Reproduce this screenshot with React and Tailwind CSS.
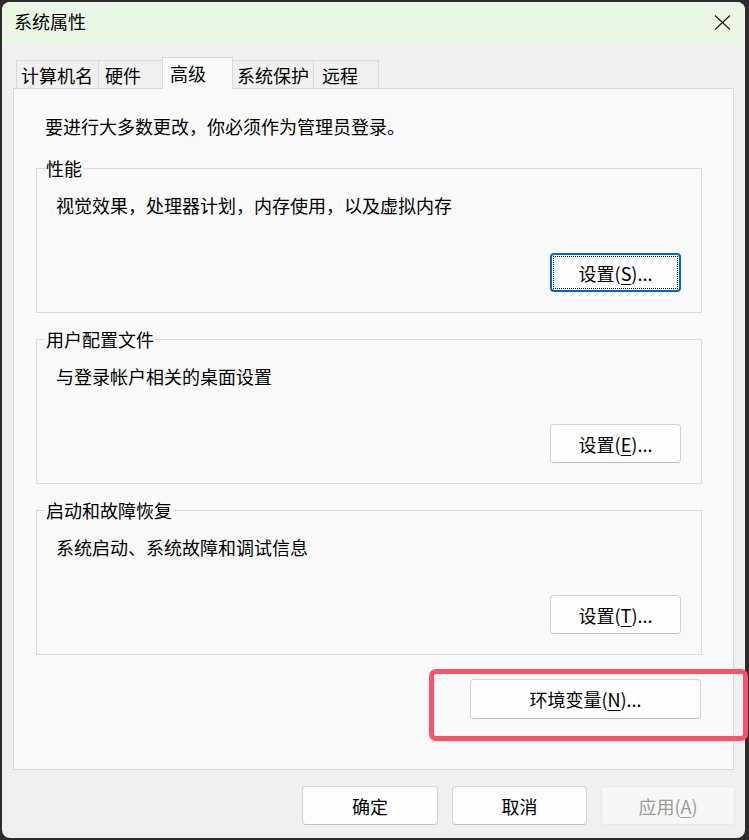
function Btn({ children, w = "w-[131px]", h = "h-[39px]", focused = false, disabled = false, extra = "" }) {
  const base =
    "relative flex items-center justify-center rounded-[4px] text-[18px] leading-[18px] " + w + " " + h + " " + extra;
  if (focused) {
    return (
      <div className={base + " bg-[#fdfdfd] border-2 border-[#0067c0]"}>
        <span className="absolute inset-[1px] border border-dotted border-black rounded-[1px]"></span>
        <span className="relative">{children}</span>
      </div>
    );
  }
  if (disabled) {
    return (
      <div className={base + " bg-[#f7f7f7] border border-[#e8e8e8] text-[#9a9a9a]"}>
        {children}
      </div>
    );
  }
  return (
    <div className={base + " bg-[#fdfdfd] border border-[#d3d3d3] border-b-[#c2c2c2]"}>
      {children}
    </div>
  );
}

function U({ children }) {
  return <span className="underline decoration-1 underline-offset-[3px]">{children}</span>;
}

function Group({ label, desc, btn, extra = "" }) {
  return (
    <div className={"relative flex flex-col h-[145px] border border-[#dcdcdc] pt-[27px] pl-[19px] pr-[20px] " + extra}>
      <span className="absolute left-[8px] -top-[10px] px-[1px] bg-[#f9f9f9] leading-[18px]">{label}</span>
      <div className="leading-[18px]">{desc}</div>
      <div className="self-end mt-[39px]">{btn}</div>
    </div>
  );
}

export default function App() {
  const tabs = [
    { t: "计算机名", w: "w-[83px]", pl: "pl-[4px]" },
    { t: "硬件", w: "w-[65px]", pl: "pl-[6px]" },
    { t: "高级", w: "w-[71px]", pl: "pl-[7px]", sel: true },
    { t: "系统保护", w: "w-[82px]", pl: "pl-[4px]" },
    { t: "远程", w: "w-[66px]", pl: "pl-[8px]" },
  ];
  return (
    <div className="relative w-[749px] h-[840px] bg-[#2b2b2b] pt-[2px] pl-[2px] pr-[4px] pb-[2px] font-['Noto_Sans_CJK_SC','Noto_Sans',sans-serif] text-[18px] leading-[18px] text-black">
      <div className="h-full rounded-[8px] overflow-hidden bg-[#f0f0f0] flex flex-col">
        {/* title bar */}
        <div className="h-[42px] shrink-0 bg-[#ebf7e6] flex items-start justify-between pt-[10px] pl-[12px] pr-[14px]">
          <span className="leading-[18px]">系统属性</span>
          <svg className="mt-[3px]" width="17" height="15" viewBox="0 0 17 15">
            <path d="M1 0.5 L16 14.5 M16 0.5 L1 14.5" stroke="#1c1c1c" strokeWidth="1.2" fill="none" />
          </svg>
        </div>
        {/* tabs */}
        <div className="mt-[13px] ml-[14px] h-[32px] flex items-end">
          {tabs.map((tb, i) =>
            tb.sel ? (
              <div
                key={i}
                className={"relative z-10 -ml-px h-[32px] border border-b-0 border-[#d9d9d9] bg-[#f9f9f9] pt-[6px] " + tb.w + " " + tb.pl}
              >
                {tb.t}
              </div>
            ) : (
              <div
                key={i}
                className={"h-[29px] border border-b-0 border-[#d9d9d9] bg-[#f0f0f0] pt-[5px] " + (i > 0 ? "-ml-px " : "") + tb.w + " " + tb.pl}
              >
                {tb.t}
              </div>
            )
          )}
        </div>
        {/* panel */}
        <div className="-mt-px mx-[11px] h-[682px] shrink-0 border border-[#d9d9d9] bg-[#f9f9f9] flex flex-col pt-[28px] pl-[22px] pr-[31px]">
          <div className="ml-[9px]">要进行大多数更改，你必须作为管理员登录。</div>
          <Group
            extra="mt-[33px]"
            label="性能"
            desc="视觉效果，处理器计划，内存使用，以及虚拟内存"
            btn={
              <Btn focused>
                设置(<U>S</U>)...
              </Btn>
            }
          />
          <Group
            extra="mt-[26px]"
            label="用户配置文件"
            desc="与登录帐户相关的桌面设置"
            btn={
              <Btn>
                设置(<U>E</U>)...
              </Btn>
            }
          />
          <Group
            extra="mt-[26px]"
            label="启动和故障恢复"
            desc="系统启动、系统故障和调试信息"
            btn={
              <Btn>
                设置(<U>T</U>)...
              </Btn>
            }
          />
          <div className="self-end mt-[24px] mr-[1px]">
            <Btn w="w-[231px]" h="h-[40px]">
              环境变量(<U>N</U>)...
            </Btn>
          </div>
        </div>
        {/* footer */}
        <div className="flex justify-end gap-[14px] pt-[16px] pr-[10px]">
          <Btn w="w-[136px]">确定</Btn>
          <Btn w="w-[135px]">取消</Btn>
          <Btn w="w-[134px]" disabled>
            应用(<U>A</U>)
          </Btn>
        </div>
      </div>
      {/* highlight overlay */}
      <div className="absolute left-[429px] top-[669px] w-[319px] h-[72px] border-[5px] border-[#ff5468] rounded-[7px] pointer-events-none"></div>
    </div>
  );
}
